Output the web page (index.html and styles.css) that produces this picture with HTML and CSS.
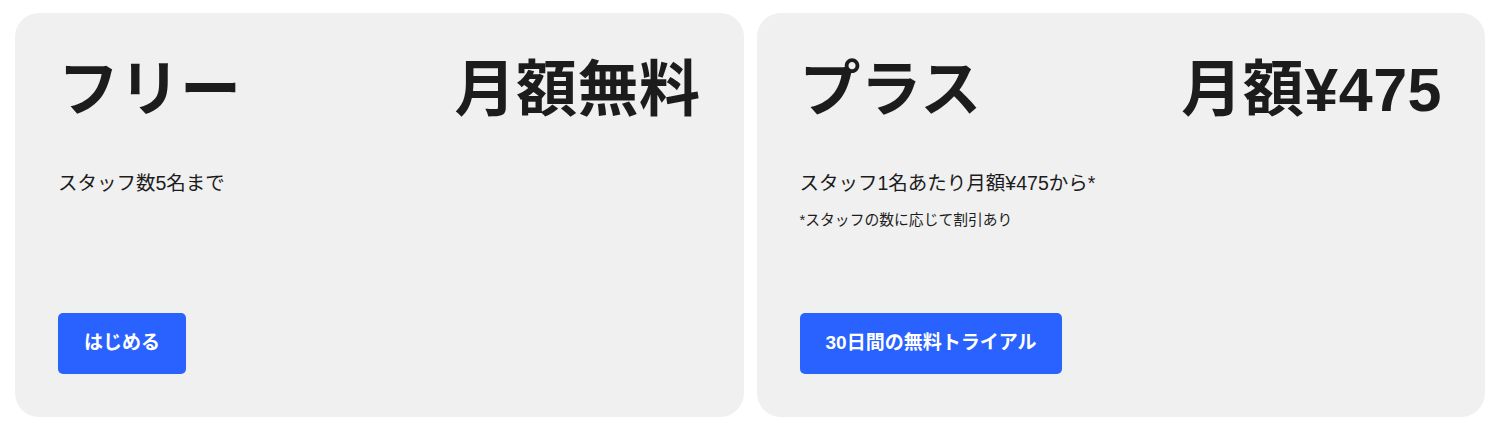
FILE: index.html
```html
<!DOCTYPE html>
<html lang="ja">

<head>
    <meta charset="utf-8" />
    <meta name="viewport" content="width=device-width, initial-scale=1.0" />
    <title>料金プラン</title>
    <link rel="stylesheet" href="styles.css">
</head>

<body>
    <div class="plans">
        <section class="plan">
            <div class="plan-head">
                <h2>フリー</h2>
                <span class="price">月額無料</span>
            </div>
            <p class="summary">スタッフ数5名まで</p>
            <a class="cta" href="#">はじめる</a>
        </section>
        <section class="plan">
            <div class="plan-head">
                <h2>プラス</h2>
                <span class="price">月額¥475</span>
            </div>
            <p class="summary">スタッフ1名あたり月額¥475から*</p>
            <p class="note">*スタッフの数に応じて割引あり</p>
            <a class="cta" href="#">30日間の無料トライアル</a>
        </section>
    </div>
</body>

</html>
```

FILE: styles.css
```css
body {
    margin: 13px 15px;
    background: #ffffff;
    color: #1c1c1c;
    font-family: "Liberation Sans", "Noto Sans CJK JP", sans-serif;
}

.plans {
    display: grid;
    grid-template-columns: 1fr 1fr;
    gap: 13px;
    height: 404px;
}

.plan {
    display: flex;
    flex-direction: column;
    padding: 43px;
    background: #f0f0f0;
    border-radius: 24px;
}

.plan-head {
    display: flex;
    justify-content: space-between;
    align-items: center;
}

h2,
.price {
    margin: 0;
    font-size: 61px;
    font-weight: bold;
    line-height: 1.13;
}

.price {
    letter-spacing: 0.5px;
}

.summary {
    margin: 44px 0 0;
    font-size: 19.5px;
    line-height: 1.45;
}

.note {
    margin: 12px 0 0;
    font-size: 14.8px;
    line-height: 1.5;
}

.cta {
    align-self: flex-start;
    margin-top: auto;
    padding: 18px 26px;
    background: #2962ff;
    color: #ffffff;
    border-radius: 5px;
    font-size: 19px;
    font-weight: bold;
    line-height: 1.3;
    text-decoration: none;
}
```
